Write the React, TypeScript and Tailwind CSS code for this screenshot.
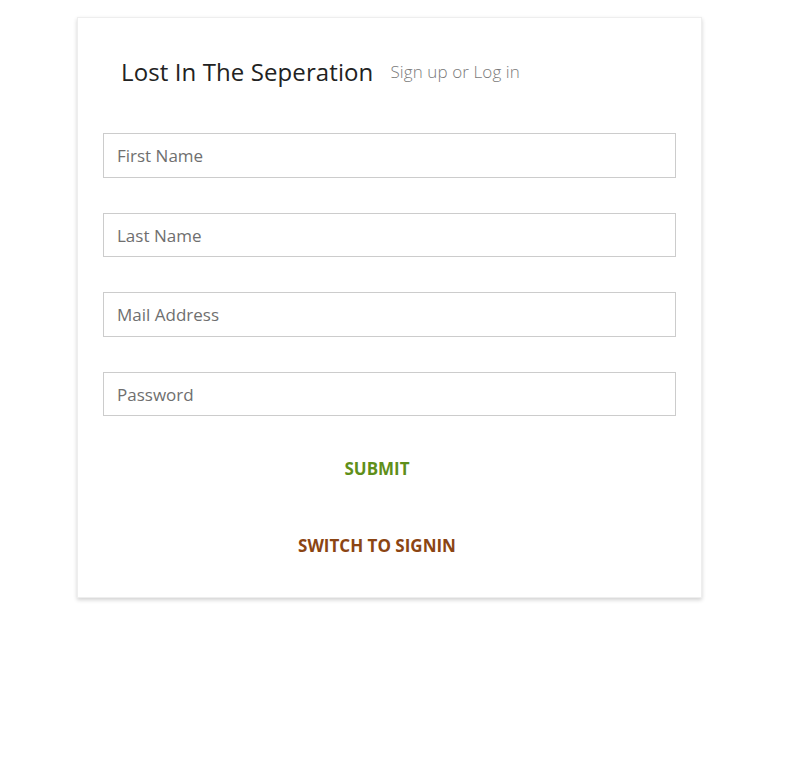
import React from "react";

export default function App() {
  const fields = ["First Name", "Last Name", "Mail Address", "Password"];
  return (
    <div className="min-h-[762px] w-full bg-white" style={{ fontFamily: '"Open Sans", "Noto Sans", sans-serif' }}>
      <div className="pt-[17px] pl-[77px]">
        <div className="w-[625px] h-[581px] bg-white border border-[#eeeeee] shadow-[0_2px_4px_rgba(0,0,0,0.18)]">
          <div className="flex items-center pl-[43px] pt-[37px]">
            <span className="text-[24px] font-medium text-[#222222] leading-[34px] tracking-[0.1px]">Lost In The Seperation</span>
            <span className="ml-[17px] text-[17px] font-light text-[#7a7a7a] leading-[24px] tracking-[0.1px]">Sign up or Log in</span>
          </div>
          <div className="px-[25px] mt-[44px] flex flex-col gap-[35px]">
            {fields.map((f) => (
              <input
                key={f}
                type={f === "Password" ? "password" : "text"}
                placeholder={f}
                className="w-full h-[44.5px] border border-[#cccccc] px-[13px] pt-[1px] text-[17px] text-[#555] placeholder:text-[#6f6f6f] outline-none"
              />
            ))}
          </div>
          <div className="flex flex-col items-center pr-[25px]">
            <button className="mt-[41px] text-[17px] font-bold text-[#5f8f1a] leading-[24px]">SUBMIT</button>
            <button className="mt-[53px] text-[17px] font-bold text-[#8b4513] leading-[24px]">SWITCH TO SIGNIN</button>
          </div>
        </div>
      </div>
    </div>
  );
}
